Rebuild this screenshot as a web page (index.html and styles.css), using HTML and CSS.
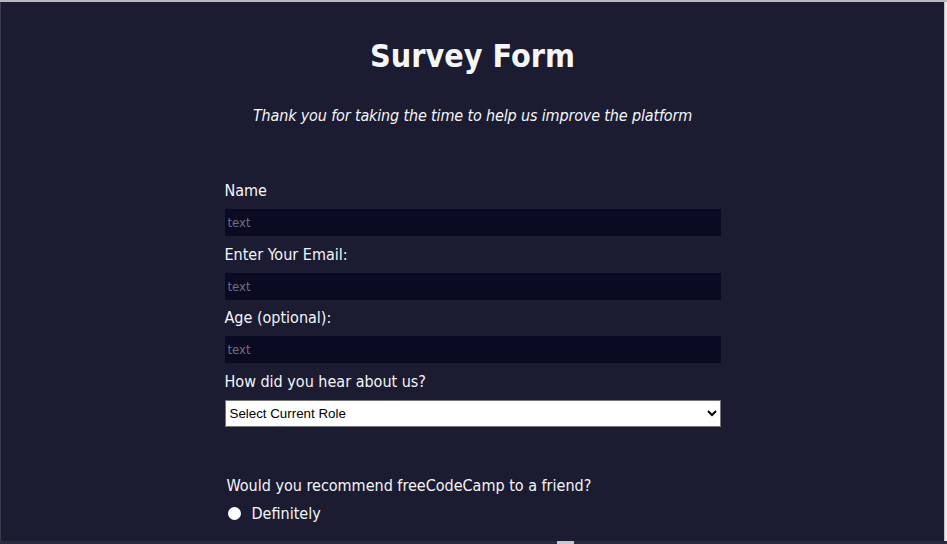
FILE: index.html
```html
<!DOCTYPE html>
<html lang="en">
<head>
<meta charset="utf-8">
<title>Survey Form</title>
<link rel="stylesheet" href="styles.css">
</head>
<body>
<div class="shell">
  <div class="viewport">
    <h1 class="title">Survey Form</h1>
    <p class="description">Thank you for taking the time to help us improve the platform</p>
    <form class="survey">
      <div class="fields">
        <label class="label" for="name">Name</label>
        <input class="field" id="name" type="text" placeholder="text">
        <label class="label" for="email">Enter Your Email:</label>
        <input class="field" id="email" type="email" placeholder="text">
        <label class="label" for="age">Age (optional):</label>
        <input class="field" id="age" type="number" placeholder="text">
        <label class="label" for="role">How did you hear about us?</label>
        <select class="select" id="role">
          <option>Select Current Role</option>
        </select>
      </div>
      <div class="group">
        <p class="question">Would you recommend freeCodeCamp to a friend?</p>
        <label class="radio-row"><span class="radio"></span><span>Definitely</span></label>
      </div>
    </form>
  </div>
  <div class="vscroll"></div>
</div>
<div class="hscroll"><span class="thumb"></span></div>
</body>
</html>
```

FILE: styles.css
```css
* { box-sizing: border-box; }
html, body {
  margin: 0;
  padding: 0;
  width: 947px;
  height: 544px;
  overflow: hidden;
  background: #1b1b32;
}
body {
  border-top: 2px solid #b9b9bd;
  font-family: "DejaVu Sans Condensed", "DejaVu Sans", sans-serif;
  color: #f5f6f7;
}
.shell {
  display: flex;
  height: 539px;
  border-left: 1px solid #3a3c4c;
}
.viewport {
  flex: 1;
  overflow: hidden;
  background: #1b1b32;
}
.vscroll {
  width: 3px;
  background: #e8e8ea;
  border-left: 1px solid #c4c4c8;
}
.hscroll {
  height: 3px;
  background: #2a2b3f;
  position: relative;
}
.thumb {
  position: absolute;
  left: 557px;
  top: 0;
  width: 17px;
  height: 3px;
  background: #c8c8cc;
}
.title {
  margin: 34px 0 0;
  text-align: center;
  font-size: 32px;
  font-weight: bold;
  line-height: 40px;
}
.description {
  margin: 30px 0 0;
  text-align: center;
  font-style: italic;
  font-size: 16px;
  line-height: 20px;
  letter-spacing: -0.15px;
}
.survey {
  width: 496px;
  margin: 0 auto;
}
.fields {
  display: flex;
  flex-direction: column;
  padding-top: 46.5px;
}
.label {
  font-size: 16px;
  line-height: 19px;
  margin: 8.5px 0 9px;
}
.field {
  width: 100%;
  height: 27px;
  margin: 0;
  border: 1px solid #0a0a23;
  background: #0a0a23;
  color: #fff;
  font-family: "DejaVu Sans Condensed", "DejaVu Sans", sans-serif;
  font-size: 13px;
  padding: 0 2px;
}
.field::placeholder { color: #6e6f82; }
.select {
  width: 100%;
  height: 27px;
  margin: 0;
  border: 1px solid #767676;
  background: #fff;
  color: #000;
  font-family: "Liberation Sans", Arial, sans-serif;
  font-size: 13.33px;
}
.group {
  padding-top: 49px;
  padding-left: 2px;
}
.question {
  margin: 0;
  font-size: 16px;
  line-height: 19px;
}
.radio-row {
  display: flex;
  align-items: center;
  gap: 11px;
  margin-top: 9px;
  font-size: 16px;
  line-height: 19px;
}
.radio {
  width: 13px;
  height: 13px;
  border-radius: 50%;
  background: #fff;
  margin-left: 1px;
}
```
